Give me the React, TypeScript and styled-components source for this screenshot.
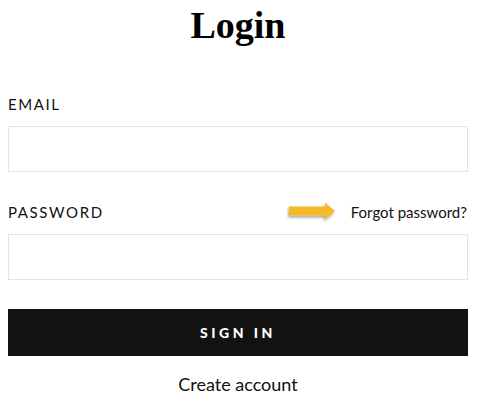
import React from "react";
import styled, { createGlobalStyle } from "styled-components";

const Global = createGlobalStyle`
  html, body { margin: 0; padding: 0; background: #ffffff; }
  body { font-family: Lato, "Noto Sans", sans-serif; color: #121212; }
  * { box-sizing: border-box; }
`;

const Page = styled.div`
  width: 460px;
  margin-left: 8px;
  display: flex;
  flex-direction: column;
`;

const Title = styled.h1`
  margin: 3px 0 0;
  font-family: "Liberation Serif", "DejaVu Serif", serif;
  font-weight: 700;
  font-size: 38px;
  line-height: 44px;
  text-align: center;
  color: #000;
`;

const Field = styled.div<{ $top: number }>`
  display: flex;
  flex-direction: column;
  margin-top: ${(p) => p.$top}px;
`;

const LabelRow = styled.div`
  display: flex;
  align-items: center;
  justify-content: space-between;
  height: 18px;
`;

const Label = styled.label`
  font-size: 15px;
  line-height: 18px;
  letter-spacing: 1.6px;
  text-transform: uppercase;
  color: #121212;
`;

const Forgot = styled.a`
  display: flex;
  align-items: center;
  gap: 12px;
  font-size: 15px;
  line-height: 18px;
  color: #121212;
  text-decoration: none;
  margin-right: 1px;
`;

const Input = styled.input`
  margin-top: 13px;
  height: 46px;
  width: 100%;
  border: 1px solid #e6e4df;
  background: #fff;
  outline: none;
  font: inherit;
  padding: 0 14px;
`;

const Button = styled.button`
  margin-top: 29px;
  height: 47px;
  width: 100%;
  border: none;
  background: #121212;
  color: #fff;
  font-family: Lato, "Noto Sans", sans-serif;
  font-weight: 900;
  font-size: 14px;
  letter-spacing: 3.5px;
  text-transform: uppercase;
  cursor: pointer;
`;

const Create = styled.a`
  margin-top: 18px;
  font-size: 18px;
  line-height: 20px;
  text-align: center;
  color: #121212;
  text-decoration: none;
`;

const Arrow = () => (
  <svg width="52" height="22" viewBox="0 0 52 22" aria-hidden="true">
    <defs>
      <filter id="sh" x="-20%" y="-40%" width="140%" height="200%">
        <feDropShadow dx="-1" dy="2" stdDeviation="1.4" floodColor="#000" floodOpacity="0.35" />
      </filter>
    </defs>
    <path
      d="M2 5.5 H38 V1.5 L48 10 L38 18.5 V14.5 H2 Z"
      fill="#f4b928"
      filter="url(#sh)"
    />
  </svg>
);

export default function App() {
  return (
    <>
      <Global />
      <Page>
        <Title>Login</Title>
        <Field $top={48}>
          <LabelRow>
            <Label htmlFor="email">Email</Label>
          </LabelRow>
          <Input id="email" type="email" />
        </Field>
        <Field $top={31}>
          <LabelRow>
            <Label htmlFor="password">Password</Label>
            <Forgot href="#">
              <Arrow />
              Forgot password?
            </Forgot>
          </LabelRow>
          <Input id="password" type="password" />
        </Field>
        <Button>Sign in</Button>
        <Create href="#">Create account</Create>
      </Page>
    </>
  );
}
